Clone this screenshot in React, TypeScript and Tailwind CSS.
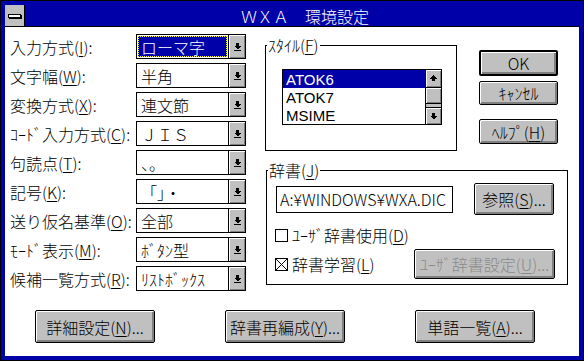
import React from "react";

function DownGlyph() {
  return (
    <svg width="7" height="8" viewBox="0 0 7 8" shapeRendering="crispEdges">
      <rect x="2" y="0" width="3" height="3" fill="#000" />
      <polygon points="0,3 7,3 3.5,6.5" fill="#000" />
      <rect x="0" y="7" width="7" height="1" fill="#000" />
    </svg>
  );
}

function ArrowUp() {
  return (
    <svg width="7" height="7" viewBox="0 0 7 7" shapeRendering="crispEdges">
      <polygon points="3.5,0 7,3.5 0,3.5" fill="#000" />
      <rect x="2" y="3" width="3" height="3" fill="#000" />
    </svg>
  );
}

function ArrowDown() {
  return (
    <svg width="7" height="7" viewBox="0 0 7 7" shapeRendering="crispEdges">
      <rect x="2" y="0" width="3" height="3" fill="#000" />
      <polygon points="0,3 7,3 3.5,6.5" fill="#000" />
    </svg>
  );
}

function Combo({ value, focused }: { value: React.ReactNode; focused?: boolean }) {
  return (
    <div className="flex h-[25px] w-[110px] border border-black bg-white">
      <div className="flex flex-1 items-center p-[1px]">
        {focused ? (
          <div className="flex h-full w-full items-center border border-dotted border-[#ffff00] bg-[#0000a8] pl-[2px] text-white">
            {value}
          </div>
        ) : (
          <div className="pl-[3px]">{value}</div>
        )}
      </div>
      <div className="flex w-[17px] items-center justify-center border-l border-black bg-[#c0c0c0] shadow-[inset_1px_1px_0_#fff,inset_-1px_-1px_0_#808080]">
        <DownGlyph />
      </div>
    </div>
  );
}

function Btn({
  children,
  className = "",
  isDefault,
  disabled,
}: {
  children: React.ReactNode;
  className?: string;
  isDefault?: boolean;
  disabled?: boolean;
}) {
  return (
    <div
      className={`flex items-center justify-center whitespace-nowrap rounded-[2px] bg-[#c0c0c0] ${
        isDefault ? "border-2" : "border"
      } border-black shadow-[inset_1px_1px_0_#fff,inset_-2px_-2px_0_#808080] ${
        disabled ? "text-[#8a8a8a]" : "text-black"
      } ${className}`}
    >
      {children}
    </div>
  );
}

function Row({ label, children }: { label: React.ReactNode; children: React.ReactNode }) {
  return (
    <div className="flex h-[25px] items-center">
      <div className="w-[126px] whitespace-nowrap">{label}</div>
      {children}
    </div>
  );
}

function Checkbox({ checked }: { checked?: boolean }) {
  return (
    <div className="flex h-[13px] w-[13px] items-center justify-center border border-black bg-white">
      {checked && (
        <svg width="11" height="11" viewBox="0 0 11 11" shapeRendering="crispEdges">
          <line x1="0" y1="0" x2="11" y2="11" stroke="#000" strokeWidth="1" />
          <line x1="11" y1="0" x2="0" y2="11" stroke="#000" strokeWidth="1" />
        </svg>
      )}
    </div>
  );
}

export default function App() {
  return (
    <div className="h-[361px] w-[584px] border border-black bg-[#0000a8] p-[4px] font-['Noto_Sans_CJK_JP',sans-serif] text-[16px] font-light leading-[16px] text-black">
      <div className="flex h-[351px] w-[574px] flex-col">
        {/* title bar */}
        <div className="flex h-[22px] border-b border-black">
          <div className="flex w-[20px] items-center justify-center border-r border-black bg-[#c0c0c0]">
            <div className="h-[4px] w-[13px] border border-black bg-white shadow-[1px_1px_0_#000]" />
          </div>
          <div className="flex flex-1 items-center justify-center bg-[#0000a8] pl-[6px] text-white">
            ＷＸＡ　環境設定
          </div>
        </div>

        {/* body */}
        <div className="flex h-[329px] flex-col bg-white">
          <div className="flex items-start">
            {/* left column */}
            <div className="flex flex-col gap-[4px] pl-[5px] pt-[7px]">
              <Row label={<>入力方式(<u className="underline-offset-2">I</u>):</>}>
                <Combo value="ローマ字" focused />
              </Row>
              <Row label={<>文字幅(<u className="underline-offset-2">W</u>):</>}>
                <Combo value="半角" />
              </Row>
              <Row label={<>変換方式(<u className="underline-offset-2">X</u>):</>}>
                <Combo value="連文節" />
              </Row>
              <Row label={<>ｺｰﾄﾞ入力方式(<u className="underline-offset-2">C</u>):</>}>
                <Combo value="ＪＩＳ" />
              </Row>
              <Row label={<>句読点(<u className="underline-offset-2">T</u>):</>}>
                <Combo value="、。" />
              </Row>
              <Row label={<>記号(<u className="underline-offset-2">K</u>):</>}>
                <Combo value="「」・" />
              </Row>
              <Row label={<>送り仮名基準(<u className="underline-offset-2">O</u>):</>}>
                <Combo value="全部" />
              </Row>
              <Row label={<>ﾓｰﾄﾞ表示(<u className="underline-offset-2">M</u>):</>}>
                <Combo value="ﾎﾞﾀﾝ型" />
              </Row>
              <Row label={<>候補一覧方式(<u className="underline-offset-2">R</u>):</>}>
                <Combo value="ﾘｽﾄﾎﾞｯｸｽ" />
              </Row>
            </div>

            {/* right column */}
            <div className="ml-[19px] flex flex-col pt-[10px]">
              <div className="flex items-start">
                <fieldset className="h-[114px] w-[192px] border border-black p-0">
                  <legend className="ml-[1px] px-[1px] leading-[16px]">
                    ｽﾀｲﾙ(<u className="underline-offset-2">F</u>)
                  </legend>
                  <div className="ml-[16px] mt-[16px] flex h-[56px] w-[160px] border border-black bg-white">
                    <div className="flex flex-1 flex-col font-['Liberation_Sans',sans-serif] text-[15px] font-normal">
                      <div className="flex h-[18px] items-center bg-[#0000a8] pl-[3px] leading-[17px] text-white">ATOK6</div>
                      <div className="flex h-[18px] items-center pl-[3px] leading-[17px]">ATOK7</div>
                      <div className="flex h-[18px] items-center pl-[3px] leading-[17px]">MSIME</div>
                    </div>
                    <div className="flex w-[16px] flex-col border-l border-black bg-[#c0c0c0]">
                      <div className="flex h-[18px] items-center justify-center border-b border-black shadow-[inset_1px_1px_0_#fff,inset_-1px_-1px_0_#808080]">
                        <ArrowUp />
                      </div>
                      <div className="h-[16px] border-b border-black shadow-[inset_1px_1px_0_#fff,inset_-1px_-1px_0_#808080]" />
                      <div className="flex-1 bg-[#c0c0c0]" />
                      <div className="flex h-[17px] items-center justify-center border-t border-black shadow-[inset_1px_1px_0_#fff,inset_-1px_-1px_0_#808080]">
                        <ArrowDown />
                      </div>
                    </div>
                  </div>
                </fieldset>
                <div className="ml-[22px] flex flex-col">
                  <Btn isDefault className="mt-[13px] h-[26px] w-[79px]">OK</Btn>
                  <Btn className="mt-[5px] h-[24px] w-[79px]">ｷｬﾝｾﾙ</Btn>
                  <Btn className="mt-[14px] h-[25px] w-[79px]">
                    ﾍﾙﾌﾟ(<u className="underline-offset-2">H</u>)
                  </Btn>
                </div>
              </div>

              <fieldset className="ml-[1px] mt-[11px] h-[123px] w-[302px] border border-black p-0">
                <legend className="ml-[1px] px-[1px] leading-[16px]">
                  辞書(<u className="underline-offset-2">J</u>)
                </legend>
                <div className="mt-[5px] flex items-center pl-[9px]">
                  <div className="flex h-[27px] w-[177px] items-center border border-black pl-[3px] whitespace-nowrap">
                    A:¥WINDOWS¥WXA.DIC
                  </div>
                  <Btn className="ml-[21px] h-[32px] w-[80px]">
                    参照(<u className="underline-offset-2">S</u>)...
                  </Btn>
                </div>
                <div className="mt-[10px] flex h-[20px] items-center gap-[4px] pl-[8px]">
                  <Checkbox />
                  <span>
                    ﾕｰｻﾞ辞書使用(<u className="underline-offset-2">D</u>)
                  </span>
                </div>
                <div className="mt-[4px] flex items-center pl-[8px] pr-[12px]">
                  <div className="flex items-center gap-[4px]">
                    <Checkbox checked />
                    <span>
                      辞書学習(<u className="underline-offset-2">L</u>)
                    </span>
                  </div>
                  <Btn disabled className="ml-auto h-[30px] w-[141px]">
                    ﾕｰｻﾞ辞書設定(<u className="underline-offset-2">U</u>)...
                  </Btn>
                </div>
              </fieldset>
            </div>
          </div>

          {/* bottom buttons */}
          <div className="mt-[19px] flex gap-[70px] pl-[30px]">
            <Btn className="h-[33px] w-[120px]">
              詳細設定(<u className="underline-offset-2">N</u>)...
            </Btn>
            <Btn className="h-[33px] w-[120px]">
              辞書再編成(<u className="underline-offset-2">Y</u>)...
            </Btn>
            <Btn className="h-[33px] w-[120px]">
              単語一覧(<u className="underline-offset-2">A</u>)...
            </Btn>
          </div>
        </div>
      </div>
    </div>
  );
}
